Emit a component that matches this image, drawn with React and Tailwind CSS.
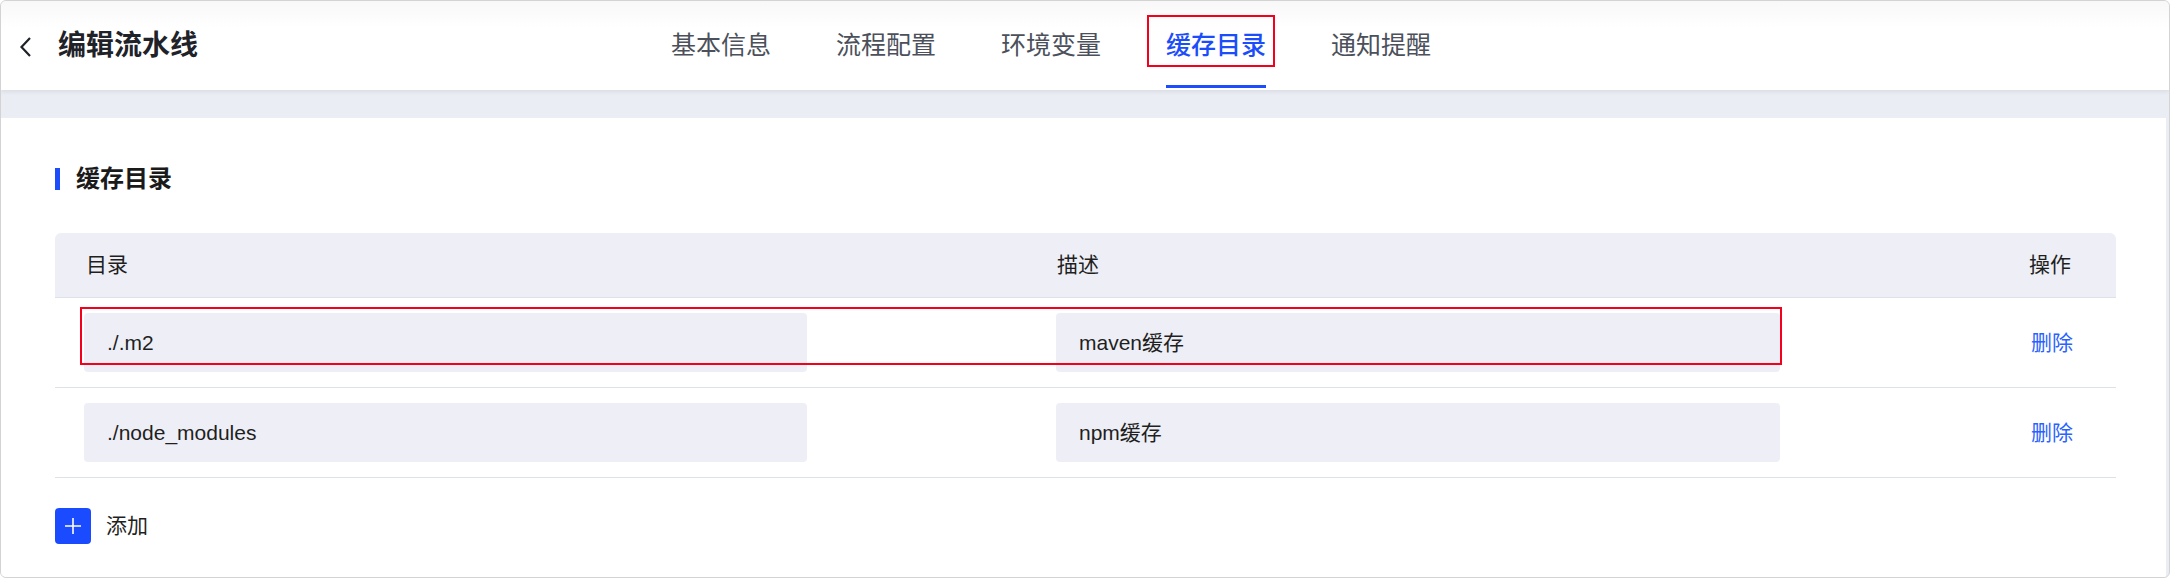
import React from "react";

const tabs = ["基本信息", "流程配置", "环境变量", "缓存目录", "通知提醒"];

const rows = [
  { dir: "./.m2", desc: "maven缓存", marked: true },
  { dir: "./node_modules", desc: "npm缓存" },
];

const font = { fontFamily: '"Liberation Sans", "Noto Sans CJK SC", sans-serif' };

const App = () => {
  return (
    <div
      className="w-[2170px] h-[578px] overflow-hidden border border-[#d3d3d3] rounded-[6px] bg-[#eaedf4] flex flex-col"
      style={font}
    >
      {/* header */}
      <header className="relative z-10 h-[89px] flex-none flex items-stretch bg-gradient-to-b from-[#f8f8f8] to-white to-[30%] shadow-[0_2px_4px_rgba(0,0,0,0.07)]">
        <div className="w-[670px] flex items-center pl-[17px]">
          <svg width="16" height="22" viewBox="0 0 16 22" fill="none" className="mt-[3px]">
            <path d="M12 2 L3.5 11 L12 20" stroke="#1f2329" strokeWidth="2.2" />
          </svg>
          <h1 className="ml-[24px] text-[28px] font-semibold text-[#1f2329] leading-none">编辑流水线</h1>
        </div>

        <nav className="flex items-stretch gap-[65px]">
          {tabs.map((t) => {
            const active = t === "缓存目录";
            return (
              <div key={t} className="relative flex items-center">
                <span
                  className={
                    active
                      ? "text-[25px] leading-none text-[#1c4dfa] font-medium"
                      : "text-[25px] leading-none text-[#4b505b]"
                  }
                >
                  {t}
                </span>
                {active && (
                  <>
                    <div className="absolute left-0 right-0 bottom-[2px] h-[3px] bg-[#1c4dfa]" />
                    <div className="absolute left-[-19px] right-[-9px] top-[14px] h-[52px] border-2 border-[#f2001c]" />
                  </>
                )}
              </div>
            );
          })}
        </nav>
      </header>

      <div className="h-[28px] flex-none" />

      {/* card */}
      <main className="flex-1 bg-white mr-[3px] pl-[54px] pr-[50px] pt-[50px]">
        <div className="flex items-center h-[22px]">
          <div className="w-[5px] h-[22px] bg-[#1c4dfa]" />
          <h2 className="ml-[16px] text-[24px] font-semibold text-[#1a1a1a] leading-none">缓存目录</h2>
        </div>

        <div className="mt-[43px]">
          <div className="grid grid-cols-[972px_972px_1fr] h-[65px] items-center bg-[#eeeff6] rounded-t-[6px] border-b border-[#dde1e8] text-[21px] text-[#1f1f1f]">
            <div className="pl-[31px]">目录</div>
            <div className="pl-[30px]">描述</div>
            <div className="pl-[30px]">操作</div>
          </div>

          <div className="relative">
            {rows.map((r) => (
              <div
                key={r.dir}
                className="grid grid-cols-[972px_972px_1fr] h-[90px] items-center border-b border-[#dde1e8]"
              >
                <div className="pl-[29px]">
                  <div className="w-[723px] h-[59px] rounded-[4px] bg-[#eeeff6] flex items-center pl-[23px] text-[21px] text-[#1f1f1f]">
                    {r.dir}
                  </div>
                </div>
                <div className="pl-[29px]">
                  <div className="w-[724px] h-[59px] rounded-[4px] bg-[#eeeff6] flex items-center pl-[23px] text-[21px] text-[#1f1f1f]">
                    {r.desc}
                  </div>
                </div>
                <div className="pl-[32px] text-[21px] text-[#2a62ff]">删除</div>
              </div>
            ))}
            {/* annotation box on first row */}
            <div className="absolute left-[25px] top-[9px] w-[1702px] h-[58px] border-2 border-[#f2001c]" />
          </div>
        </div>

        <div className="mt-[30px] flex items-center">
          <div className="w-[36px] h-[36px] rounded-[4px] bg-[#1a4bff] flex items-center justify-center">
            <svg width="18" height="18" viewBox="0 0 18 18">
              <path d="M9 1 V17 M1 9 H17" stroke="#fff" strokeWidth="1.6" />
            </svg>
          </div>
          <span className="ml-[15px] text-[21px] text-[#1f1f1f]">添加</span>
        </div>
      </main>
    </div>
  );
};

export default App;
